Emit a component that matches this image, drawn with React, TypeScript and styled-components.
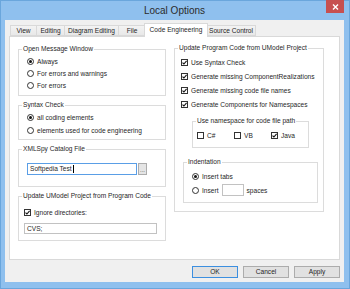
import React from 'react';
import styled, { createGlobalStyle } from 'styled-components';

const GlobalStyle = createGlobalStyle`
  html, body {
    margin: 0;
    padding: 0;
  }
  body {
    width: 350px;
    height: 289px;
    overflow: hidden;
    font-family: "Liberation Sans", Arial, sans-serif;
    color: #1f1f1f;
  }
`;

const TEXT = '6.6px';

const Frame = styled.div`
  width: 350px;
  height: 289px;
  box-sizing: border-box;
  background: #8fc0ee;
  border: 1px solid #6aa6dc;
  padding: 0 5px 6px 4px;
  display: flex;
  flex-direction: column;
`;

const TitleBar = styled.div`
  height: 19px;
  display: grid;
  grid-template-columns: 1fr auto 1fr;
  align-items: start;
`;

const Title = styled.div`
  grid-column: 2;
  font-size: 10px;
  line-height: 19px;
  color: #2b2b2b;
`;

const CloseButton = styled.div`
  grid-column: 3;
  justify-self: end;
  margin-top: -1px;
  width: 18px;
  height: 13px;
  background: #c75050;
  display: flex;
  align-items: center;
  justify-content: center;
`;

const Client = styled.div`
  flex: 1;
  background: #f0f0f0;
  padding: 3px 4px 4px 4px;
  display: flex;
  flex-direction: column;
`;

const TabRow = styled.div`
  height: 13px;
  display: flex;
  align-items: flex-end;
  padding-left: 1px;
  position: relative;
  z-index: 1;
`;

const Tab = styled.div<{ $active?: boolean; $w: number }>`
  box-sizing: border-box;
  width: ${p => p.$w}px;
  height: ${p => (p.$active ? 14 : 11)}px;
  margin-left: ${p => (p.$active ? -2 : -1)}px;
  margin-right: ${p => (p.$active ? -1 : 0)}px;
  margin-bottom: ${p => (p.$active ? -1 : 0)}px;
  border: 1px solid #d9d9d9;
  border-bottom: ${p => (p.$active ? 'none' : '1px solid #d9d9d9')};
  background: ${p => (p.$active ? '#ffffff' : 'linear-gradient(#f3f3f3, #e8e8e8)')};
  font-size: ${TEXT};
  line-height: ${p => (p.$active ? 11 : 9)}px;
  text-align: center;
  white-space: nowrap;
  position: relative;
  z-index: ${p => (p.$active ? 2 : 0)};
  &:first-child {
    margin-left: 0;
  }
`;

const Panel = styled.div`
  height: 224px;
  box-sizing: border-box;
  background: #ffffff;
  border: 1px solid #d9d9d9;
  padding: 8px 0 0 8px;
  display: grid;
  grid-template-columns: 148px 150px;
  column-gap: 8px;
  align-items: start;
`;

const Column = styled.div<{ $shift?: number }>`
  display: flex;
  flex-direction: column;
  gap: 5px;
  margin-top: ${p => p.$shift ?? 0}px;
`;

const Group = styled.fieldset<{ $m?: string }>`
  margin: ${p => p.$m ?? '0'};
  padding: 0;
  min-width: 0;
  border: 1px solid #dcdcdc;
  font-size: ${TEXT};
`;

const Legend = styled.legend`
  margin-left: 3px;
  padding: 0 1px;
  font-size: ${TEXT};
  line-height: 8px;
`;

const Body = styled.div<{ $p: string }>`
  padding: ${p => p.$p};
  display: flex;
  flex-direction: column;
`;

const Row = styled.div<{ $h: number; $mt?: number }>`
  height: ${p => p.$h}px;
  margin-top: ${p => p.$mt ?? 0}px;
  display: flex;
  align-items: center;
  gap: 3px;
  font-size: ${TEXT};
  white-space: nowrap;
`;

const InlineRow = styled.div`
  display: flex;
  height: 12px;
  align-items: center;
`;

const Option = styled.div<{ $w: number }>`
  width: ${p => p.$w}px;
  display: flex;
  align-items: center;
  gap: 3px;
  font-size: ${TEXT};
`;

const RadioCircle = styled.span<{ $on?: boolean }>`
  box-sizing: border-box;
  width: 7px;
  height: 7px;
  border-radius: 50%;
  border: 1px solid #333333;
  background: #ffffff;
  display: flex;
  align-items: center;
  justify-content: center;
  flex-shrink: 0;
  &::after {
    content: '';
    width: 3px;
    height: 3px;
    border-radius: 50%;
    background: ${p => (p.$on ? '#111111' : 'transparent')};
  }
`;

const CheckSquare = styled.span`
  box-sizing: border-box;
  width: 7px;
  height: 7px;
  border: 1px solid #333333;
  background: #ffffff;
  display: flex;
  align-items: center;
  justify-content: center;
  flex-shrink: 0;
`;

const TextBox = styled.div<{ $w: number; $h: number; $focus?: boolean }>`
  box-sizing: border-box;
  width: ${p => p.$w}px;
  height: ${p => p.$h}px;
  border: 1px solid ${p => (p.$focus ? '#5a9ee6' : '#c2c2c2')};
  background: #ffffff;
  font-size: ${TEXT};
  line-height: ${p => p.$h - 2}px;
  padding-left: 2px;
  display: flex;
  align-items: center;
`;

const Caret = styled.span`
  width: 1px;
  height: 8px;
  background: #000000;
  margin-left: 1px;
`;

const BrowseButton = styled.div`
  box-sizing: border-box;
  width: 9px;
  height: 12px;
  margin-left: 1px;
  border: 1px solid #acacac;
  background: #e5e5e5;
  font-size: 6px;
  line-height: 12px;
  text-align: center;
  color: #333;
`;

const ButtonRow = styled.div`
  margin-top: 6px;
  display: flex;
  justify-content: flex-end;
  gap: 5px;
`;

const Button = styled.div<{ $default?: boolean }>`
  box-sizing: border-box;
  width: 46px;
  height: 12px;
  border: 1px solid ${p => (p.$default ? '#3c8fe0' : '#acacac')};
  background: #e1e1e1;
  font-size: ${TEXT};
  line-height: 10px;
  text-align: center;
`;

const Radio = ({ on, label, h = 12, mt }: { on?: boolean; label: string; h?: number; mt?: number }) => (
  <Row $h={h} $mt={mt}>
    <RadioCircle $on={on} />
    {label}
  </Row>
);

const CheckMark = () => (
  <svg width="5" height="5" viewBox="0 0 5 5">
    <path d="M0.5 2.6 L1.9 4 L4.6 0.8" fill="none" stroke="#111" strokeWidth="1.1" />
  </svg>
);

const Box = ({ checked }: { checked?: boolean }) => (
  <CheckSquare>{checked && <CheckMark />}</CheckSquare>
);

const Check = ({ label, h = 14 }: { label: string; h?: number }) => (
  <Row $h={h}>
    <Box checked />
    {label}
  </Row>
);

const tabs = [
  { label: 'View', w: 27 },
  { label: 'Editing', w: 29 },
  { label: 'Diagram Editing', w: 55 },
  { label: 'File', w: 28 },
  { label: 'Code Engineering', w: 64, active: true },
  { label: 'Source Control', w: 50 },
];

export default function App() {
  return (
    <>
      <GlobalStyle />
      <Frame>
        <TitleBar>
          <Title>Local Options</Title>
          <CloseButton>
            <svg width="7" height="6" viewBox="0 0 7 6">
              <path d="M1 0.5 L6 5.5 M6 0.5 L1 5.5" stroke="#fff" strokeWidth="1.4" />
            </svg>
          </CloseButton>
        </TitleBar>
        <Client>
          <TabRow>
            {tabs.map(t => (
              <Tab key={t.label} $w={t.w} $active={t.active}>
                {t.label}
              </Tab>
            ))}
          </TabRow>
          <Panel>
            <Column>
              <Group>
                <Legend>Open Message Window</Legend>
                <Body $p="2px 0 4px 8px">
                  <Radio on label="Always" />
                  <Radio label="For errors and warnings" />
                  <Radio label="For errors" />
                </Body>
              </Group>
              <Group>
                <Legend>Syntax Check</Legend>
                <Body $p="2px 0 2px 8px">
                  <Radio on label="all coding elements" h={13} />
                  <Radio label="elements used for code engineering" h={13} />
                </Body>
              </Group>
              <Group>
                <Legend>XMLSpy Catalog File</Legend>
                <Body $p="10px 0 11px 8px">
                  <InlineRow>
                    <TextBox $w={110} $h={12} $focus>
                      Softpedia Test
                      <Caret />
                    </TextBox>
                    <BrowseButton>...</BrowseButton>
                  </InlineRow>
                </Body>
              </Group>
              <Group>
                <Legend>Update UModel Project from Program Code</Legend>
                <Body $p="6px 0 6px 5px">
                  <Check label="Ignore directories:" h={12} />
                  <Row $h={11} $mt={5}>
                    <TextBox $w={133} $h={11}>CVS;</TextBox>
                  </Row>
                </Body>
              </Group>
            </Column>
            <Column $shift={-1}>
              <Group>
                <Legend>Update Program Code from UModel Project</Legend>
                <Body $p="3px 0 8px 6px">
                  <Check label="Use Syntax Check" />
                  <Check label="Generate missing ComponentRealizations" />
                  <Check label="Generate missing code file names" />
                  <Check label="Generate Components for Namespaces" />
                  <Group $m="6px 14px 0 11px">
                    <Legend>Use namespace for code file path</Legend>
                    <Body $p="4px 0 6px 4px">
                      <InlineRow>
                        <Option $w={37}>
                          <Box />
                          C#
                        </Option>
                        <Option $w={37}>
                          <Box />
                          VB
                        </Option>
                        <Option $w={37}>
                          <Box checked />
                          Java
                        </Option>
                      </InlineRow>
                    </Body>
                  </Group>
                  <Group $m="10px 5px 0 2px">
                    <Legend>Indentation</Legend>
                    <Body $p="4px 0 6px 8px">
                      <Radio on label="Insert tabs" />
                      <Row $h={12} $mt={2}>
                        <RadioCircle />
                        Insert
                        <TextBox $w={22} $h={12} />
                        spaces
                      </Row>
                    </Body>
                  </Group>
                </Body>
              </Group>
            </Column>
          </Panel>
          <ButtonRow>
            <Button $default>OK</Button>
            <Button>Cancel</Button>
            <Button>Apply</Button>
          </ButtonRow>
        </Client>
      </Frame>
    </>
  );
}
